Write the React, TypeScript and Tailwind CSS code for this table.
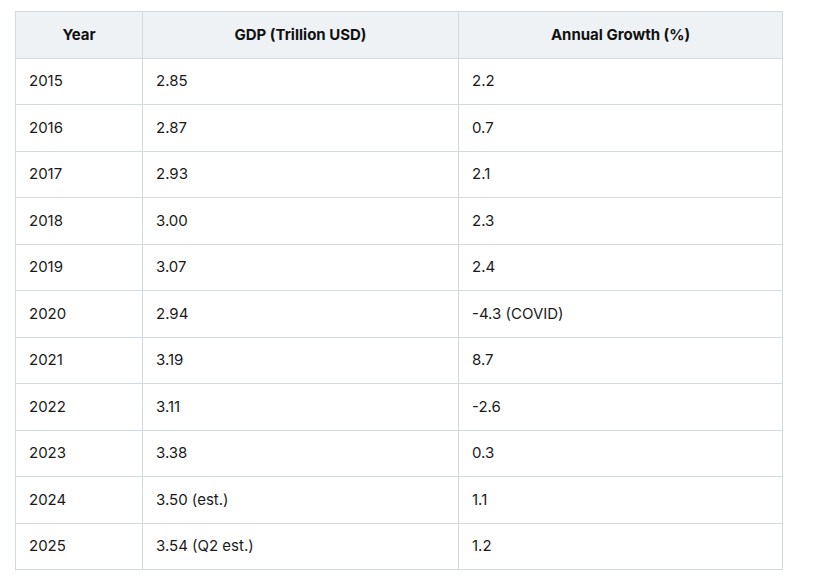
const rows: [string, string, string][] = [
  ["2015", "2.85", "2.2"],
  ["2016", "2.87", "0.7"],
  ["2017", "2.93", "2.1"],
  ["2018", "3.00", "2.3"],
  ["2019", "3.07", "2.4"],
  ["2020", "2.94", "-4.3 (COVID)"],
  ["2021", "3.19", "8.7"],
  ["2022", "3.11", "-2.6"],
  ["2023", "3.38", "0.3"],
  ["2024", "3.50 (est.)", "1.1"],
  ["2025", "3.54 (Q2 est.)", "1.2"],
];

export default function App() {
  return (
    <div className="min-h-[585px] bg-white pt-[11px] pl-[15px] font-['Inter',sans-serif] text-[15px] text-[#1a1a1a]">
      <table className="w-[767px] table-fixed border-collapse">
        <colgroup>
          <col className="w-[127px]" />
          <col className="w-[316px]" />
          <col className="w-[324px]" />
        </colgroup>
        <thead>
          <tr className="h-[46.5px] bg-[#eef2f4]">
            {["Year", "GDP (Trillion USD)", "Annual Growth (%)"].map((h) => (
              <th key={h} className="border border-[#d3dbe1] px-[13px] text-center font-bold text-[#111]">
                {h}
              </th>
            ))}
          </tr>
        </thead>
        <tbody>
          {rows.map((r) => (
            <tr key={r[0]} className="h-[46.5px]">
              {r.map((c, i) => (
                <td key={i} className="border border-[#d3dbe1] px-[13px] text-left font-normal">
                  {c}
                </td>
              ))}
            </tr>
          ))}
        </tbody>
      </table>
    </div>
  );
}
